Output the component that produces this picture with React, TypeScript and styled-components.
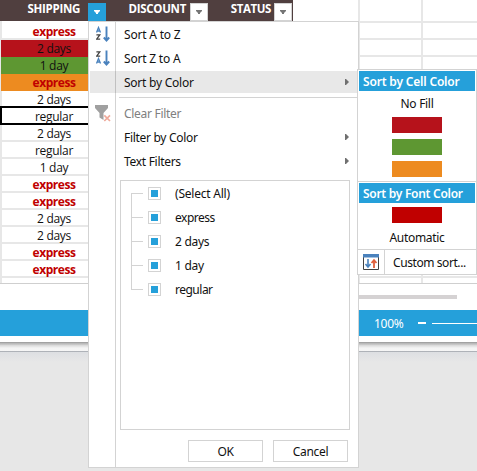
import React from 'react';
import styled, { createGlobalStyle } from 'styled-components';

const BLUE = '#25a0da';
const LINE = '#d3d3d3';
const GRID = '#e7e7e7';

const GlobalStyle = createGlobalStyle`
  * { box-sizing: border-box; }
  body { margin: 0; background: #e7e7e7; overflow: hidden; }
  svg { display: block; flex: none; }
`;

const Page = styled.div`
  position: relative;
  width: 477px;
  height: 471px;
  overflow: hidden;
  background: #e7e7e7;
  font: 12px/16px 'Noto Sans', sans-serif;
  color: #111;
  white-space: nowrap;
`;

const Label = styled.span<{ $track?: number }>`
  letter-spacing: ${(p) => p.$track ?? -0.3}px;
`;

/* ---------- spreadsheet ---------- */

const Sheet = styled.div`
  display: flex;
  height: 284px;
  background: #fff;
  border-bottom: 1px solid #cfcfcf;
`;

const Table = styled.div`
  width: 358px;
  flex: none;
`;

const HeaderRow = styled.div`
  display: flex;
  width: 293px;
  height: 21px;
  background: #503f3f;
  color: #fff;
  font: bold 11.5px/18px 'Open Sans', sans-serif;
`;

const HeaderCell = styled.div<{ $width: number; $gap: number }>`
  display: flex;
  justify-content: flex-end;
  width: ${(p) => p.$width}px;
  padding-right: 1px;
  gap: ${(p) => p.$gap}px;
`;

const FilterButton = styled.div<{ $active?: boolean }>`
  display: flex;
  align-items: center;
  justify-content: center;
  width: 18px;
  height: 18px;
  margin-top: 3px;
  border: 1px solid ${(p) => (p.$active ? BLUE : LINE)};
  background: ${(p) => (p.$active ? BLUE : '#fff')};
  color: ${(p) => (p.$active ? '#fff' : '#767676')};
`;

const Rows = styled.div`
  padding-top: 2px;
  width: 88px;
  height: 262px;
  border-left: 2px solid ${GRID};
`;

const Cell = styled.div<{ $fill?: string; $bold?: boolean; $selected?: boolean }>`
  height: 17px;
  margin-left: ${(p) => (p.$fill ? -1 : p.$selected ? -2 : 0)}px;
  padding-left: ${(p) => (p.$fill ? 19 : p.$selected ? 20 : 18)}px;
  border-bottom: ${(p) => (p.$fill ? '0' : `2px solid ${p.$selected ? '#000' : GRID}`)};
  background: ${(p) => p.$fill ?? '#fff'};
  box-shadow: ${(p) => (p.$selected ? '0 -2px 0 #000, inset 2px 0 0 #000' : 'none')};
  color: ${(p) => (p.$bold ? '#c00000' : '#111')};
  font: ${(p) => (p.$bold ? 'bold' : 'normal')} 12px/17px 'Open Sans', sans-serif;
  letter-spacing: ${(p) => (p.$bold ? -0.45 : -0.3)}px;
  text-align: center;
`;

const EmptyGrid = styled.div`
  flex: 1;
  height: 283px;
  border-left: 2px solid ${GRID};
  background: linear-gradient(${GRID}, ${GRID}) 61px 0 / 2px 100% no-repeat,
    repeating-linear-gradient(transparent 0 4px, ${GRID} 4px 6px, transparent 6px 17px) 0 17px no-repeat;
`;

const ScrollArea = styled.div`
  height: 26px;
  padding: 11px 20px 0 358px;
  background: #fff;
`;

const ScrollThumb = styled.div`
  height: 4px;
  background: #d5d2d3;
`;

const StatusBar = styled.div`
  display: flex;
  align-items: center;
  height: 26px;
  padding-left: 374px;
  background: ${BLUE};
  color: #fff;
  line-height: 18px;
`;

const StatusText = styled(Label)`
  padding-top: 2px;
`;

const ZoomMinus = styled.div`
  width: 8px;
  height: 2px;
  margin-left: auto;
  background: #fff;
`;

const ZoomTrack = styled.div`
  width: 45px;
  height: 1px;
  margin-left: 6px;
  background: #fff;
`;

const WindowEdge = styled.div`
  height: 26px;
  background: linear-gradient(#fff 0 6px, #a2a2a2 6px 7px, #b9b9b9 7px 8px, #d6d6d6 9px, #f4f4f4 12px, #f6f6f6 15px,
    #aeb2b8 15px 16px, #dddfe2 16px, #e7e7e7 26px);
`;

/* ---------- filter menu ---------- */

const Menu = styled.div`
  position: absolute;
  left: 88px;
  top: 21px;
  display: flex;
  flex-direction: column;
  width: 271px;
  height: 447px;
  padding: 1px 0 0 1px;
  border: 1px solid ${LINE};
  background: linear-gradient(${LINE}, ${LINE}) 26px 0 / 1px 100% no-repeat #fff;
`;

const Item = styled.div<{ $active?: boolean; $disabled?: boolean }>`
  display: flex;
  align-items: center;
  height: 22px;
  margin-bottom: 2px;
  padding-right: 9px;
  background: ${(p) => (p.$active ? 'rgba(0, 0, 0, .09)' : 'transparent')};
  color: ${(p) => (p.$disabled ? '#808080' : 'inherit')};
  ${Label} { padding-top: 2px; }
`;

const IconSlot = styled.div`
  display: flex;
  justify-content: center;
  width: 25px;
  margin-right: 9px;
`;

const Caret = styled.div`
  margin-left: auto;
`;

const Separator = styled.div`
  height: 1px;
  margin: 2px 1px 4px 29px;
  background: ${LINE};
`;

const Tree = styled.div`
  height: 250px;
  margin: 6px 8px 0 30px;
  padding: 1px 0 0 10px;
  border: 1px solid ${LINE};
  flex: none;
`;

const TreeRow = styled.div`
  display: flex;
  align-items: center;
  height: 24px;
`;

const Branch = styled.div<{ $first?: boolean; $last?: boolean }>`
  width: 12px;
  height: 24px;
  margin-right: 5px;
  background: linear-gradient(${LINE}, ${LINE}) 0 11px / 12px 1px no-repeat,
    linear-gradient(${LINE}, ${LINE}) 0 ${(p) => (p.$first ? 12 : 0)}px / 1px ${(p) => (p.$last ? '11px' : '24px')} no-repeat;
`;

const CheckBox = styled.div`
  width: 13px;
  height: 13px;
  margin: 0 14px 1px 0;
  padding: 2px;
  border: 1px solid ${LINE};
  &::after {
    content: '';
    display: block;
    width: 7px;
    height: 7px;
    background: ${BLUE};
  }
`;

const Buttons = styled.div`
  display: flex;
  justify-content: flex-end;
  gap: 10px;
  margin-top: 10px;
  padding-right: 10px;
`;

const Button = styled.div`
  width: 75px;
  height: 22px;
  border: 1px solid ${LINE};
  text-align: center;
  line-height: 22px;
`;

/* ---------- colour submenu ---------- */

const SubMenu = styled.div`
  position: absolute;
  left: 357px;
  top: 69px;
  width: 120px;
  height: 206px;
  border: 1px solid ${LINE};
  background: #fff;
`;

const Section = styled.div<{ $height: number }>`
  display: flex;
  flex-direction: column;
  align-items: center;
  height: ${(p) => p.$height}px;
  padding: 1px 0 0;
  border-bottom: 1px solid ${LINE};
`;

const SectionTitle = styled.div`
  width: 116px;
  height: 20px;
  padding-left: 4px;
  background: ${BLUE};
  color: #fff;
  font-weight: 600;
  line-height: 22px;
`;

const Swatch = styled.div<{ $color: string; $gap: number }>`
  width: 50px;
  height: 16px;
  margin-top: ${(p) => p.$gap}px;
  background: ${(p) => p.$color};
`;

const Choice = styled.div<{ $gap: number }>`
  height: 16px;
  margin-top: ${(p) => p.$gap}px;
`;

const CustomRow = styled.div`
  display: flex;
  align-items: center;
  height: 24px;
  ${Label} { padding-top: 2px; }
`;

const CustomIcon = styled.div`
  display: flex;
  align-items: center;
  width: 27px;
  height: 24px;
  margin-right: 8px;
  padding-left: 5px;
  border-right: 1px solid ${LINE};
`;

const Down = () => (
  <svg width="6" height="4" viewBox="0 0 6 4"><path d="M0 0H6V1L4 3V4H2V3L0 1Z" fill="currentColor" /></svg>
);

const Right = () => (
  <svg width="4" height="6" viewBox="0 0 4 6"><path d="M0 0H1L4 3L1 6H0Z" fill="#707070" /></svg>
);

const letters = {
  A: 'M.5 5.5L2.5 .5L4.5 5.5M1.3 4H3.7',
  Z: 'M.4 .8H3.8L.6 5.2H4.2',
};

const SortIcon = ({ order }: { order: ('A' | 'Z')[] }) => (
  <svg width="14" height="16" viewBox="0 0 14 16" fill="none">
    {order.map((l, i) => (
      <path key={l} d={letters[l]} transform={`translate(0 ${1 + i * 7})`} stroke={l === 'A' ? '#4a82bd' : '#424242'} strokeWidth="1.3" />
    ))}
    <path d="M10.5 .5V14M7.8 11.5L10.5 14.5L13.2 11.5" stroke="#4a82bd" strokeWidth="1.9" />
  </svg>
);

const FunnelIcon = () => (
  <svg width="16" height="17" viewBox="0 0 16 17">
    <path d="M0 0H13V3L8.5 8V15L4.5 12.5V8L0 3Z" fill="#a0a0a0" />
    <path d="M9.3 10.3L15 16M15 10.3L9.3 16" stroke="#efaa9b" strokeWidth="1.7" />
  </svg>
);

const CustomSortIcon = () => (
  <svg width="16" height="16" viewBox="0 0 16 16" fill="none">
    <path d="M.5 3V15.5H15.5V3" stroke="#424242" />
    <path d="M0 0H16V3.5H0Z" fill="#4a82bd" />
    <path d="M5 5V12M2.5 10L5 13L7.5 10" stroke="#4a82bd" strokeWidth="1.6" />
    <path d="M11 14V7M8.5 9L11 6.2L13.5 9" stroke="#e0603c" strokeWidth="1.8" />
  </svg>
);

type Row = { text: string; fill?: string; bold?: boolean; selected?: boolean };
const rows: Row[] = [
  { text: 'express', bold: true },
  { text: '2 days', fill: '#b6121b' },
  { text: '1 day', fill: '#5e9732' },
  { text: 'express', fill: '#ed8b20', bold: true },
  { text: '2 days' },
  { text: 'regular', selected: true },
  { text: '2 days' },
  { text: 'regular' },
  { text: '1 day' },
  { text: 'express', bold: true },
  { text: 'express', bold: true },
  { text: '2 days' },
  { text: '2 days' },
  { text: 'express', bold: true },
  { text: 'express', bold: true },
];

const options = [
  { text: '(Select All)', track: -0.22 },
  { text: 'express', track: -0.5 },
  { text: '2 days', track: -0.3 },
  { text: '1 day', track: -0.3 },
  { text: 'regular', track: -0.5 },
];

export default function App() {
  return (
    <Page>
      <GlobalStyle />
      <Sheet>
        <Table>
          <HeaderRow>
            <HeaderCell $width={107} $gap={8}>
              <Label>SHIPPING</Label>
              <FilterButton $active><Down /></FilterButton>
            </HeaderCell>
            <HeaderCell $width={102} $gap={4}>
              <Label>DISCOUNT</Label>
              <FilterButton><Down /></FilterButton>
            </HeaderCell>
            <HeaderCell $width={84} $gap={3}>
              <Label $track={-0.4}>STATUS</Label>
              <FilterButton><Down /></FilterButton>
            </HeaderCell>
          </HeaderRow>
          <Rows>
            {rows.map((r, i) => (
              <Cell key={i} $fill={r.fill} $bold={r.bold} $selected={r.selected}>{r.text}</Cell>
            ))}
          </Rows>
        </Table>
        <EmptyGrid />
      </Sheet>
      <ScrollArea><ScrollThumb /></ScrollArea>
      <StatusBar>
        <StatusText>100%</StatusText>
        <ZoomMinus />
        <ZoomTrack />
      </StatusBar>
      <WindowEdge />

      <Menu>
        <Item><IconSlot><SortIcon order={['A', 'Z']} /></IconSlot><Label $track={-0.2}>Sort A to Z</Label></Item>
        <Item><IconSlot><SortIcon order={['Z', 'A']} /></IconSlot><Label $track={-0.2}>Sort Z to A</Label></Item>
        <Item $active><IconSlot /><Label $track={-0.24}>Sort by Color</Label><Caret><Right /></Caret></Item>
        <Separator />
        <Item $disabled><IconSlot><FunnelIcon /></IconSlot><Label>Clear Filter</Label></Item>
        <Item><IconSlot /><Label>Filter by Color</Label><Caret><Right /></Caret></Item>
        <Item><IconSlot /><Label>Text Filters</Label><Caret><Right /></Caret></Item>
        <Tree>
          {options.map((o, i) => (
            <TreeRow key={o.text}>
              <Branch $first={i === 0} $last={i === options.length - 1} />
              <CheckBox />
              <Label $track={o.track}>{o.text}</Label>
            </TreeRow>
          ))}
        </Tree>
        <Buttons>
          <Button><Label>OK</Label></Button>
          <Button><Label>Cancel</Label></Button>
        </Buttons>
      </Menu>

      <SubMenu>
        <Section $height={112}>
          <SectionTitle><Label $track={-0.18}>Sort by Cell Color</Label></SectionTitle>
          <Choice $gap={5}><Label>No Fill</Label></Choice>
          <Swatch $color="#b6121b" $gap={5} />
          <Swatch $color="#5e9732" $gap={6} />
          <Swatch $color="#ed8b20" $gap={6} />
        </Section>
        <Section $height={68}>
          <SectionTitle><Label $track={-0.28}>Sort by Font Color</Label></SectionTitle>
          <Swatch $color="#c00000" $gap={4} />
          <Choice $gap={7}><Label>Automatic</Label></Choice>
        </Section>
        <CustomRow>
          <CustomIcon><CustomSortIcon /></CustomIcon>
          <Label $track={-0.42}>Custom sort...</Label>
        </CustomRow>
      </SubMenu>
    </Page>
  );
}
